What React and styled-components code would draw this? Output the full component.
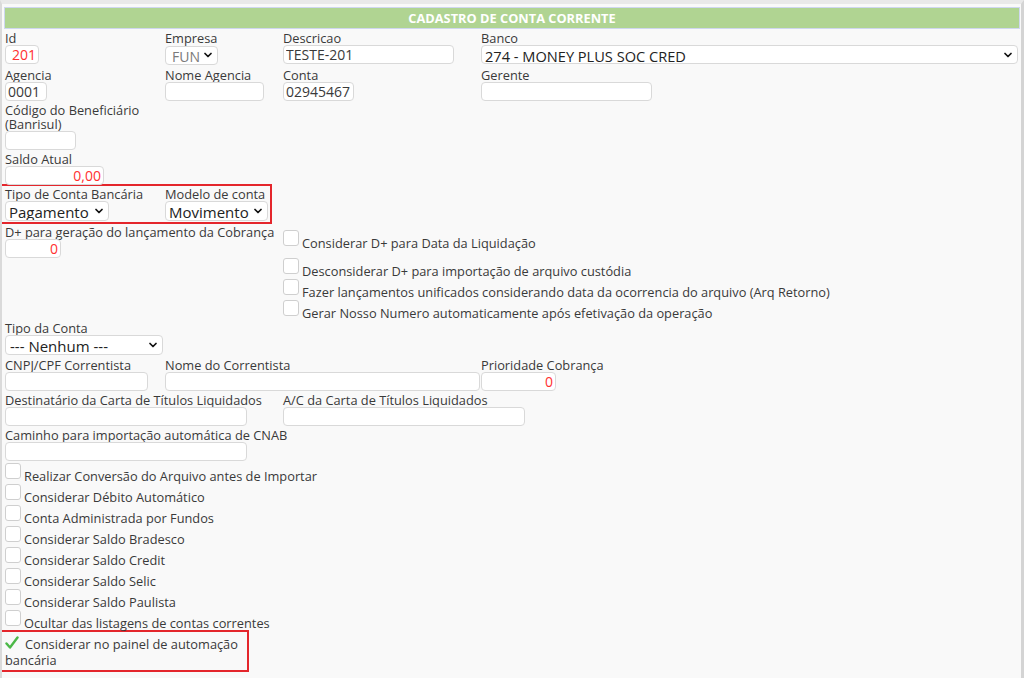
import React from "react";
import styled, { createGlobalStyle } from "styled-components";
import { ChevronDown } from "lucide-react";

const colors = {
  text: "#3a3a3a",
  page: "#f9f9f9",
  green: "#b0d492",
  headerBorder: "#cfd7ef",
  inputBorder: "#d9d9d9",
  red: "#ff3030",
  frame: "#e4262c",
  check: "#4cb848",
};

const GlobalStyle = createGlobalStyle`
  html, body {
    margin: 0;
    padding: 0;
    background: ${colors.page};
  }
  body {
    font-family: "Open Sans", "Liberation Sans", sans-serif;
    color: ${colors.text};
  }
`;

const Page = styled.div`
  width: 1024px;
  height: 678px;
  box-sizing: border-box;
  border-top: 4px solid #e9e9e9;
  border-left: 2px solid #dadada;
  border-right: 3px solid #d4d4d4;
  padding: 3px 1px 0 2px;
  background: ${colors.page};
  overflow: hidden;
`;

const Header = styled.div`
  height: 22px;
  box-sizing: border-box;
  border: 1px solid ${colors.headerBorder};
  background: ${colors.green};
  color: #fff;
  font-size: 12.8px;
  font-weight: 700;
  text-transform: uppercase;
  display: flex;
  align-items: center;
  justify-content: center;
`;

const Form = styled.div`
  padding: 2px 2px 0 1px;
`;

const Row = styled.div`
  display: grid;
  grid-template-columns: 160px 118px 198px 1fr;
  row-gap: ${(p) => p.$gap ?? 4}px;
  margin-top: ${(p) => p.$top || 0}px;
`;

const Field = styled.div`
  grid-column: span ${(p) => p.$span || 1};
  display: flex;
  flex-direction: column;
  align-items: flex-start;
  min-width: 0;
`;

const Label = styled.label`
  font-size: 12.8px;
  line-height: 14px;
  white-space: ${(p) => (p.$max ? "normal" : "nowrap")};
  max-width: ${(p) => (p.$max ? `${p.$max}px` : "none")};
`;

const Input = styled.input`
  width: ${(p) => p.$w}px;
  height: 19px;
  box-sizing: border-box;
  border: 1px solid ${colors.inputBorder};
  border-radius: 4px;
  background: #fff;
  padding: 0 2px;
  font-family: inherit;
  font-size: 14px;
  color: ${(p) => (p.$red ? colors.red : colors.text)};
  text-align: ${(p) => (p.$right ? "right" : "left")};
  outline: none;
`;

const SelectWrap = styled.div`
  position: relative;
  width: ${(p) => (p.$w ? `${p.$w}px` : "100%")};
  height: ${(p) => p.$h || 19}px;
`;

const Select = styled.select`
  appearance: none;
  width: 100%;
  height: 100%;
  box-sizing: border-box;
  border: 1px solid ${colors.inputBorder};
  border-radius: 4px;
  background: #fff;
  padding: 0 16px 0 ${(p) => p.$pad ?? 3}px;
  font-family: inherit;
  font-size: ${(p) => p.$size || 14}px;
  color: ${(p) => (p.$muted ? "#7a7a7a" : "#222")};
  outline: none;
`;

const Arrow = styled(ChevronDown)`
  position: absolute;
  right: 4px;
  top: 50%;
  transform: translateY(-50%);
  pointer-events: none;
  color: #111;
`;

const Highlight = styled.div`
  width: ${(p) => p.$w}px;
  box-sizing: border-box;
  border: 2px solid ${colors.frame};
  margin-left: -5px;
  margin-top: ${(p) => p.$top || 0}px;
  padding: ${(p) => p.$pad || "2px 0 0 3px"};
`;

const InnerRow = styled.div`
  display: grid;
  grid-template-columns: 160px 118px;
`;

const Split = styled.div`
  display: grid;
  grid-template-columns: 278px 1fr;
  margin-top: 1px;
`;

const CheckList = styled.div`
  display: flex;
  flex-direction: column;
  padding-top: ${(p) => p.$top || 0}px;
  margin-top: ${(p) => p.$mt || 0}px;
`;

const CheckItem = styled.div`
  display: flex;
  align-items: flex-start;
  height: ${(p) => p.$h || 21}px;
  font-size: 12.8px;
  line-height: 14px;
`;

const Box = styled.span`
  width: 16px;
  height: 16px;
  flex: none;
  box-sizing: border-box;
  border: 1px solid #cfcfcf;
  border-radius: 3px;
  background: #fff;
  margin-right: 3px;
`;

const CheckText = styled.span`
  padding-top: 6px;
  white-space: nowrap;
`;

const CheckedText = styled.div`
  font-size: 12.8px;
  line-height: 16px;
  width: 240px;
`;

const CheckMark = styled.svg`
  display: inline-block;
  vertical-align: -1px;
  margin-right: 6px;
`;

const Dropdown = ({ w, h, size, pad, muted, value }) => (
  <SelectWrap $w={w} $h={h}>
    <Select $size={size} $pad={pad} $muted={muted} defaultValue={value}>
      <option>{value}</option>
    </Select>
    <Arrow size={12} strokeWidth={3.5} />
  </SelectWrap>
);

const Check = ({ children, h }) => (
  <CheckItem $h={h}>
    <Box />
    <CheckText>{children}</CheckText>
  </CheckItem>
);

const bottomChecks = [
  "Realizar Conversão do Arquivo antes de Importar",
  "Considerar Débito Automático",
  "Conta Administrada por Fundos",
  "Considerar Saldo Bradesco",
  "Considerar Saldo Credit",
  "Considerar Saldo Selic",
  "Considerar Saldo Paulista",
  "Ocultar das listagens de contas correntes",
];

export default function App() {
  return (
    <>
      <GlobalStyle />
      <Page>
        <Header>Cadastro de Conta Corrente</Header>
        <Form>
          <Row>
            <Field>
              <Label>Id</Label>
              <Input $w={34} $red $right defaultValue="201" />
            </Field>
            <Field>
              <Label>Empresa</Label>
              <Dropdown w={53} value="FUN" muted pad={6} />
            </Field>
            <Field>
              <Label>Descricao</Label>
              <Input $w={171} defaultValue="TESTE-201" />
            </Field>
            <Field>
              <Label>Banco</Label>
              <Dropdown size={14.6} value="274 - MONEY PLUS SOC CRED" />
            </Field>
            <Field>
              <Label>Agencia</Label>
              <Input $w={42} defaultValue="0001" />
            </Field>
            <Field>
              <Label>Nome Agencia</Label>
              <Input $w={99} />
            </Field>
            <Field>
              <Label>Conta</Label>
              <Input $w={71} defaultValue="02945467" />
            </Field>
            <Field>
              <Label>Gerente</Label>
              <Input $w={171} />
            </Field>
          </Row>

          <Row $top={2}>
            <Field>
              <Label $max={150}>Código do Beneficiário (Banrisul)</Label>
              <Input $w={71} />
            </Field>
          </Row>

          <Row $top={2}>
            <Field>
              <Label>Saldo Atual</Label>
              <Input $w={99} $red $right defaultValue="0,00" />
            </Field>
          </Row>

          <Highlight $w={272} $top={-1} $pad="1px 0 1px 3px">
            <InnerRow>
              <Field>
                <Label>Tipo de Conta Bancária</Label>
                <Dropdown w={104} h={20} size={15} value="Pagamento" />
              </Field>
              <Field>
                <Label>Modelo de conta</Label>
                <Dropdown w={103} h={20} size={15} value="Movimento" />
              </Field>
            </InnerRow>
          </Highlight>

          <Split>
            <Field>
              <Label>D+ para geração do lançamento da Cobrança</Label>
              <Input $w={56} $red $right defaultValue="0" />
            </Field>
            <CheckList $top={5}>
              <Check h={28}>Considerar D+ para Data da Liquidação</Check>
              <Check>Desconsiderar D+ para importação de arquivo custódia</Check>
              <Check>
                Fazer lançamentos unificados considerando data da ocorrencia do
                arquivo (Arq Retorno)
              </Check>
              <Check>Gerar Nosso Numero automaticamente após efetivação da operação</Check>
            </CheckList>
          </Split>

          <Row>
            <Field>
              <Label>Tipo da Conta</Label>
              <Dropdown w={158} h={20} size={15} pad={4} value="--- Nenhum ---" />
            </Field>
          </Row>

          <Row $top={3} $gap={2}>
            <Field>
              <Label>CNPJ/CPF Correntista</Label>
              <Input $w={143} />
            </Field>
            <Field $span={2}>
              <Label>Nome do Correntista</Label>
              <Input $w={315} />
            </Field>
            <Field>
              <Label>Prioridade Cobrança</Label>
              <Input $w={75} $red $right defaultValue="0" />
            </Field>
            <Field $span={2}>
              <Label>Destinatário da Carta de Títulos Liquidados</Label>
              <Input $w={242} />
            </Field>
            <Field $span={2}>
              <Label>A/C da Carta de Títulos Liquidados</Label>
              <Input $w={242} />
            </Field>
            <Field $span={2}>
              <Label>Caminho para importação automática de CNAB</Label>
              <Input $w={242} />
            </Field>
          </Row>

          <CheckList $mt={2}>
            {bottomChecks.map((t) => (
              <Check key={t}>{t}</Check>
            ))}
          </CheckList>

          <Highlight $w={249} $top={-1} $pad="4px 0 2px 3px">
            <CheckedText>
              <CheckMark width="14" height="14" viewBox="0 0 14 14">
                <path
                  d="M1.5 7.5 L5 11.5 L12.5 1.5"
                  fill="none"
                  stroke={colors.check}
                  strokeWidth="2.4"
                  strokeLinecap="round"
                  strokeLinejoin="round"
                />
              </CheckMark>
              Considerar no painel de automação bancária
            </CheckedText>
          </Highlight>
        </Form>
      </Page>
    </>
  );
}
